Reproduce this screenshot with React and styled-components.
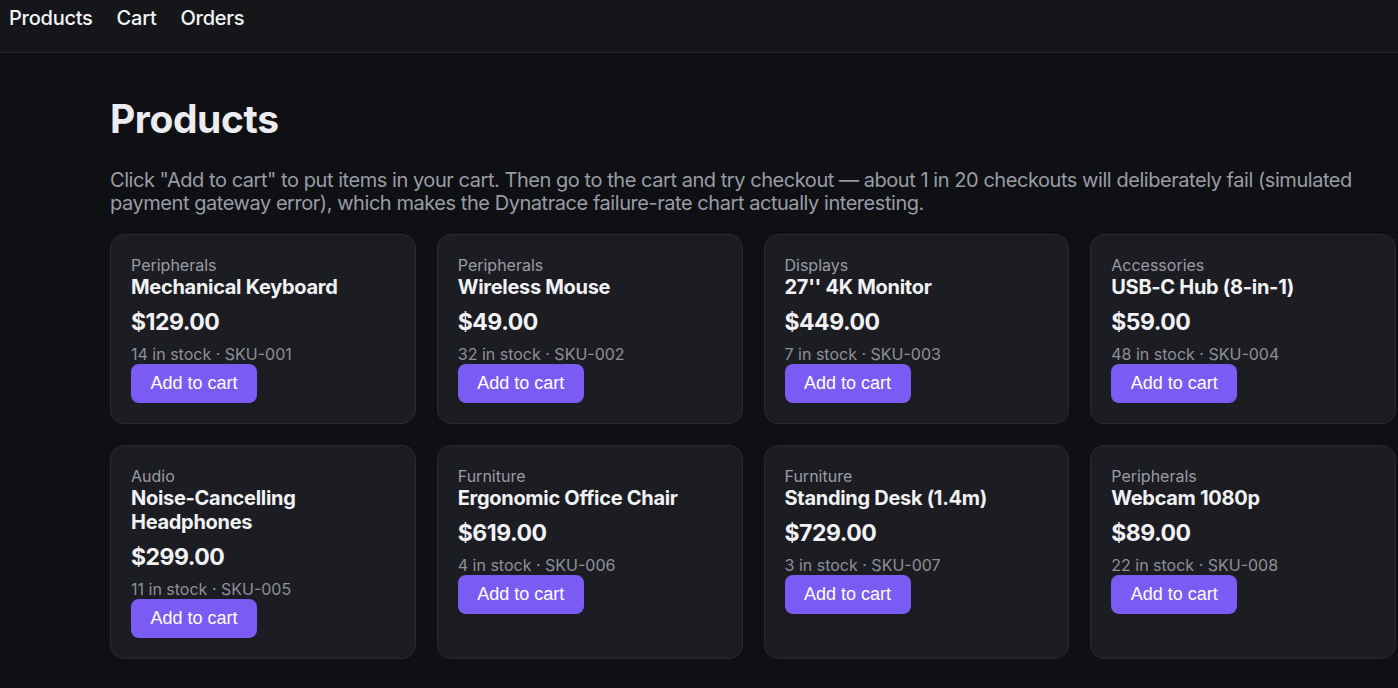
import React from "react";
import styled, { createGlobalStyle } from "styled-components";

const GlobalStyle = createGlobalStyle`
    body {
        margin: 0;
        background: #0e1014;
        font-family: Inter, "Noto Sans", sans-serif;
        color: #ececf0;
    }
`;

const Nav = styled.nav`
    height: 53px;
    display: flex;
    align-items: flex-start;
    gap: 24px;
    padding: 6px 9px 0;
    box-sizing: border-box;
    background: #15161a;
    border-bottom: 1px solid #24252b;
`;

const NavLink = styled.a`
    font-size: 20px;
    line-height: 24px;
    font-weight: 500;
    letter-spacing: -0.25px;
    color: #f4f4f6;
    text-decoration: none;
`;

const Main = styled.main`
    padding: 42px 0 0 110px;
`;

const Title = styled.h1`
    margin: 0;
    font-size: 39px;
    line-height: 48px;
    font-weight: 700;
    letter-spacing: -0.4px;
    color: #ececf0;
`;

const Description = styled.p`
    margin: 26px 0 19px;
    width: 1262px;
    font-size: 20px;
    line-height: 23px;
    letter-spacing: -0.45px;
    color: #9a9ca5;
`;

const Grid = styled.div`
    width: 1286px;
    display: grid;
    grid-template-columns: repeat(4, 1fr);
    gap: 21px;
`;

const Card = styled.div`
    background: #1c1d22;
    border: 1px solid #2a2b31;
    border-radius: 14px;
    padding: 20px;
    display: flex;
    flex-direction: column;
    align-items: flex-start;
`;

const Category = styled.div`
    font-size: 16px;
    line-height: 20px;
    color: #9a9ca5;
`;

const Name = styled.div`
    font-size: 20px;
    line-height: 24px;
    font-weight: 700;
    letter-spacing: -0.3px;
    color: #f2f2f5;
`;

const Price = styled.div`
    margin-top: 8px;
    font-size: 23px;
    line-height: 30px;
    font-weight: 700;
    letter-spacing: -0.5px;
    color: #f2f2f5;
`;

const Stock = styled.div`
    margin-top: 7px;
    font-size: 16px;
    line-height: 20px;
    color: #8e9099;
`;

const Button = styled.button`
    height: 39px;
    width: 126px;
    border: none;
    border-radius: 8px;
    background: #7a5cf5;
    color: #fff;
    font-family: "Liberation Sans", Arial, sans-serif;
    font-size: 18px;
    cursor: pointer;
`;

const products = [
    { cat: "Peripherals", name: "Mechanical Keyboard", price: 129, stock: 14 },
    { cat: "Peripherals", name: "Wireless Mouse", price: 49, stock: 32 },
    { cat: "Displays", name: "27'' 4K Monitor", price: 449, stock: 7 },
    { cat: "Accessories", name: "USB-C Hub (8-in-1)", price: 59, stock: 48 },
    { cat: "Audio", name: "Noise-Cancelling Headphones", price: 299, stock: 11 },
    { cat: "Furniture", name: "Ergonomic Office Chair", price: 619, stock: 4 },
    { cat: "Furniture", name: "Standing Desk (1.4m)", price: 729, stock: 3 },
    { cat: "Peripherals", name: "Webcam 1080p", price: 89, stock: 22 },
];

const App = () => {
    return (
        <>
            <GlobalStyle />
            <Nav>
                <NavLink href="#">Products</NavLink>
                <NavLink href="#">Cart</NavLink>
                <NavLink href="#">Orders</NavLink>
            </Nav>
            <Main>
                <Title>Products</Title>
                <Description>
                    Click "Add to cart" to put items in your cart. Then go to the
                    cart and try checkout — about 1 in 20 checkouts will
                    deliberately fail (simulated payment gateway error), which
                    makes the Dynatrace failure-rate chart actually interesting.
                </Description>
                <Grid>
                    {products.map((p, i) => (
                        <Card key={i}>
                            <Category>{p.cat}</Category>
                            <Name>{p.name}</Name>
                            <Price>${p.price.toFixed(2)}</Price>
                            <Stock>
                                {p.stock} in stock · SKU-00{i + 1}
                            </Stock>
                            <Button>Add to cart</Button>
                        </Card>
                    ))}
                </Grid>
            </Main>
        </>
    );
};

export default App;
